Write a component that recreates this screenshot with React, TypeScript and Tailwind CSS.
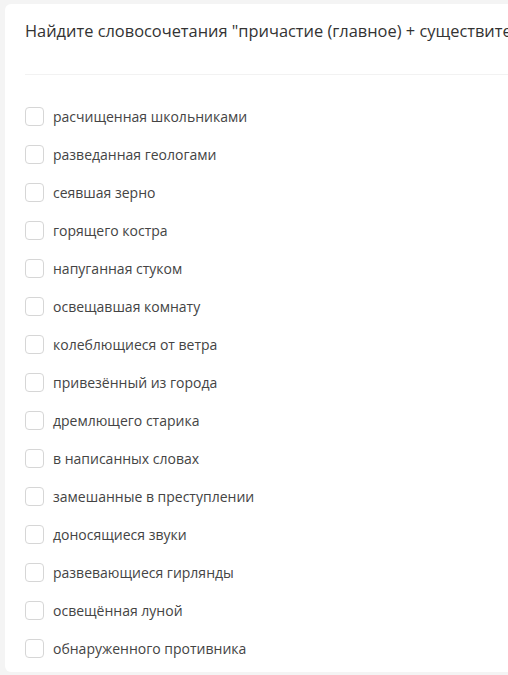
const items = [
  'расчищенная школьниками',
  'разведанная геологами',
  'сеявшая зерно',
  'горящего костра',
  'напуганная стуком',
  'освещавшая комнату',
  'колеблющиеся от ветра',
  'привезённый из города',
  'дремлющего старика',
  'в написанных словах',
  'замешанные в преступлении',
  'доносящиеся звуки',
  'развевающиеся гирлянды',
  'освещённая луной',
  'обнаруженного противника',
];

export default function App() {
  return (
    <div className="h-[675px] w-[508px] overflow-hidden bg-[#f4f4f4] pl-[5px] pt-[4px] font-['Open_Sans',sans-serif]">
      <div className="h-[668px] w-[560px] rounded-tl-[6px] rounded-bl-[6px] bg-white pl-5">
        <div className="whitespace-nowrap pt-[16px] text-[16.4px] leading-[22px] text-[#333]">
          Найдите словосочетания "причастие (главное) + существительное (зависимое)"
        </div>
        <div className="mt-[32px] h-px bg-[#f2f2f2]" />
        <ul className="flex flex-col gap-[20px] pt-[32px]">
          {items.map((t) => (
            <li key={t} className="flex h-[18px] items-center gap-[9px]">
              <span className="h-[19px] w-[19px] shrink-0 rounded-[4px] border border-[#d6d6d6] bg-white" />
              <span className="text-[14px] text-[#444]">{t}</span>
            </li>
          ))}
        </ul>
      </div>
    </div>
  );
}
